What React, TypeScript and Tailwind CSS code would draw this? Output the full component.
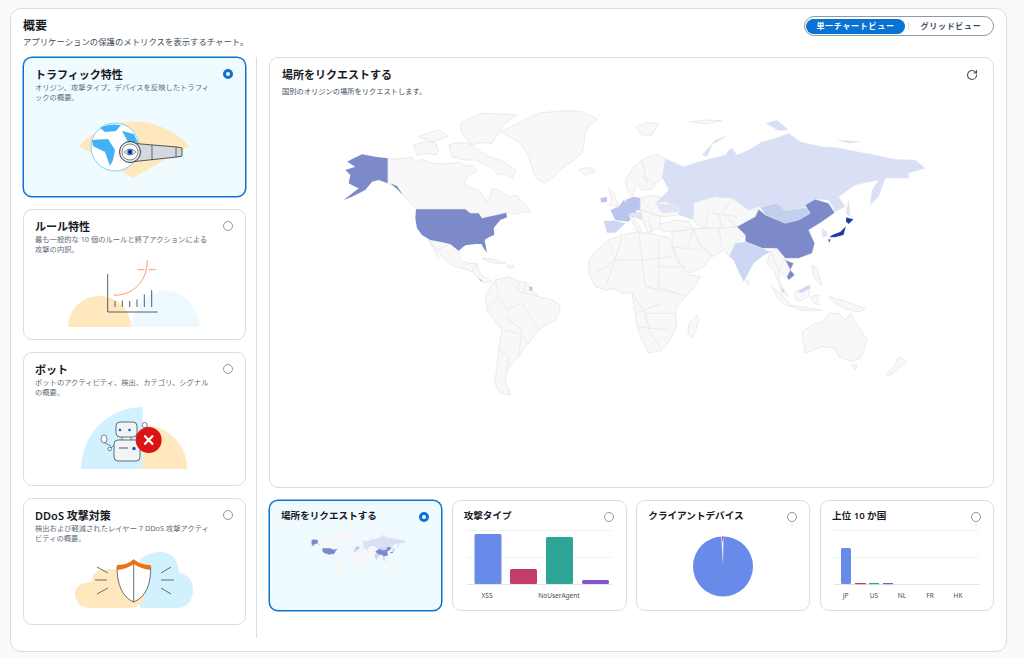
import { RotateCw } from 'lucide-react';
import type { ReactNode } from 'react';

const LAND = '#f8f8f8';
const EDGE = '#e6e6e6';

// outlines traced by eye, in zoomed-crop units (3 per page pixel)
const westLand = [
  '197,175 220,178 270,172 280,185 300,178 330,190 370,192 395,190 415,185 430,200 450,195 465,215 440,225 425,250 445,262 470,270 485,290 495,305 505,290 510,265 530,270 560,290 585,285 595,300 612,318 628,338 600,335 585,342 555,338 525,345 500,350 480,355 470,340 445,340 430,328 282,328 255,300 225,262 197,250',
  '275,135 310,125 340,128 350,150 345,165 310,160 285,165',
  '290,110 320,98 350,90 380,108 355,118 330,125',
  '415,70 450,52 480,40 530,42 585,45 560,62 540,80 525,105 510,130 480,128 450,135 435,118 420,100',
  '380,135 410,128 440,130 470,150 500,170 545,185 582,210 570,235 550,222 530,225 510,205 490,195 460,180 430,180 390,170',
  '535,95 590,70 650,40 720,32 780,35 828,58 800,78 790,100 785,135 780,160 750,185 720,205 695,230 670,250 650,240 640,230 628,195 620,170 605,145 590,125',
  '770,210 790,203 812,205 820,215 790,225',
  '320,420 355,425 385,432 410,452 412,470 415,480 440,490 465,490 455,505 450,515 420,505 395,498 380,490 360,470 345,450',
  '320,420 335,445 350,472 340,455',
  '450,515 465,490 470,510 480,525 510,545 495,548 480,545',
  '480,475 505,476 525,480 550,490 530,490 510,488',
  '555,495 575,497 572,505 558,504',
  '490,590 505,560 520,540 560,530 590,545 610,545 630,570 650,590 690,600 715,615 710,640 700,660 670,675 650,690 635,710 620,730 605,745 590,770 570,790 555,810 550,845 565,885 535,880 518,850 525,800 530,750 540,690 515,660 495,630',
  '860,265 875,280 880,290 890,320 860,315 870,300',
];
const westLines = [
  '520,540 530,590 495,630', '530,590 555,630 600,610 650,690', '560,530 590,575 650,590', '540,690 590,700 620,730',
  '550,650 600,690 590,770', '530,750 560,770 555,810', '610,545 605,578', '590,575 590,545', '422,505 440,490', '345,450 385,432',
];
const eastLand = [
  '-100,480 -75,450 -40,420 0,405 50,395 90,402 125,410 140,412 165,480 195,525 235,530 215,565 190,590 165,620 160,640 165,680 140,725 120,750 80,760 68,735 60,720 45,680 40,640 30,580 -5,578 -20,565 -50,570 -80,560 -100,520',
  '225,645 230,660 222,690 210,712 198,700 200,672',
  '10,240 35,200 60,180 90,165 110,165 135,180 125,205 125,230 100,250 88,268 60,270 45,250 30,290 15,265',
  '55,295 80,288 100,285 120,295 140,310 170,320 170,345 120,350 100,345 55,330',
  '55,330 115,350 115,385 95,390 80,400 65,370',
  '20,345 30,350 55,385 62,402 45,392',
  '115,372 160,360 200,365 215,385 185,392 150,395 115,392',
  '215,310 250,296 280,290 330,295 380,330 410,328 400,350 345,380 300,385 250,385 225,375 215,360',
  '150,395 185,392 215,385 228,420 240,440 270,470 240,505 200,520 175,490 150,440',
  '215,385 250,385 290,385 310,415 320,440 275,470 240,440 228,420',
  '290,385 345,380 370,405 340,430 322,470 300,440',
  '445,455 465,445 490,475 505,510 518,525 500,540 485,525 470,510 475,550 490,575 500,590 478,575 455,510 435,490',
  '450,560 480,585 510,620 490,615 465,590',
  '520,575 565,555 562,575 560,590 530,605 518,595',
  '500,615 550,622 600,630 540,632',
  '565,590 590,585 585,600 595,615 575,610',
  '570,495 585,505 590,520 600,555 590,550 575,530',
  '620,590 660,600 700,615 730,625 715,635 700,635 660,622 640,610',
  '540,695 580,670 600,668 620,640 650,640 670,660 685,640 710,680 735,720 725,755 715,775 690,785 650,770 640,745 600,740 550,760 545,730',
  '690,795 705,795 700,810',
  '830,770 855,785 830,805 800,830 795,820 815,800',
  '40,80 75,68 110,70 90,105 60,105',
  '205,65 250,60 300,62 250,72',
  '372,540 382,545 378,556',
];
const eastLines = [
  '-40,420 -20,480 -80,520', '-20,480 60,480 70,560', '60,480 150,470', '70,560 160,580', '30,580 70,640 160,640',
  '60,480 50,395', '110,420 110,560', '70,640 85,700 120,750', '-20,480 -50,560', '60,230 100,250', '60,180 75,250',
  '215,385 200,440', '300,385 290,340', '250,385 260,340', '150,440 230,450', '470,510 490,475', '80,350 90,395',
  '0,405 -20,480', '110,500 190,500', '110,560 190,590', '45,680 140,690', '330,295 300,340 345,380', '270,340 345,350',
  '445,455 470,510', '200,365 215,310', '60,300 100,345', '40,640 120,610',
];
const westShade: [string, string][] = [
  ['120,163 160,170 197,175 197,250 170,240 150,245 130,270 105,283 90,290 65,300 110,265 95,258 80,250 85,225 70,210 100,200 75,185 95,175', '#7d8aca'],
  ['205,250 225,258 243,285 228,270', '#7d8aca'],
  ['282,328 430,328 445,340 470,340 480,355 500,350 525,345 553,338 555,352 535,360 525,372 515,385 517,405 500,412 488,420 495,458 485,445 478,432 460,432 430,436 410,452 385,432 355,425 325,420 300,405 285,385 280,355', '#7d8aca'],
  ['622,560 632,560 632,572 622,572', '#b9c5ec'],
  ['468,533 480,540 478,546', '#b9c5ec'],
  ['835,295 855,290 855,305 838,308', '#b9c5ec'],
  ['865,330 890,320 905,300 945,335 920,365 880,360', '#b9c5ec'],
  ['910,300 935,290 958,295 960,330 925,332', '#b9c5ec'],
  ['845,362 880,362 910,370 895,385 880,398 855,398', '#cdd6f2'],
  ['920,340 960,335 960,360 935,352', '#dfe5f7'],
];
const eastShade: [string, string][] = [
  ['130,175 185,200 220,188 250,180 310,165 320,150 330,145 345,165 380,150 420,125 460,115 500,100 535,125 600,140 640,142 680,150 760,165 820,178 880,180 910,205 860,220 860,235 790,235 770,290 745,315 750,270 770,240 700,255 650,290 670,320 640,335 620,300 580,298 555,320 490,335 415,320 380,330 330,295 280,290 215,310 215,360 170,345 170,320 130,305 100,310 140,270 120,230', '#d9e0f6'],
  ['240,165 280,120 320,105 270,135 255,170', '#d9e0f6'],
  ['680,300 685,350 672,340', '#d9e0f6'],
  ['430,70 465,60 500,90 470,92', '#d9e0f6'],
  ['645,120 720,125 680,130', '#d9e0f6'],
  ['100,310 165,315 175,335 120,340', '#dfe5f7'],
  ['415,322 465,310 490,332 555,322 565,340 530,360 490,370 430,345', '#c4cfee'],
  ['345,380 400,350 410,328 430,345 490,370 530,360 565,340 550,315 580,298 620,310 638,338 600,365 560,390 578,430 570,460 530,475 490,475 465,445 420,445 370,425 370,405', '#7d8aca'],
  ['490,480 515,490 505,510 518,525 500,540 495,530 505,510', '#7d8aca'],
  ['340,430 370,425 420,445 445,455 420,470 395,490 365,545 345,505 335,480 322,470', '#cdd6f2'],
  ['600,385 615,395 615,410 600,410', '#dfe5f7'],
  ['475,558 490,575 482,578', '#cdd6f2'],
  ['525,575 560,555 565,565 540,578', '#cdd6f2'],
  ['672,352 695,358 680,372 672,365', '#1f35a5'],
  ['672,378 665,405 640,412 622,412 630,405 655,395', '#1f35a5'],
  ['618,418 626,418 622,428', '#1f35a5'],
];

function WorldMap({ className }: { className: string }) {
  return (
    <svg viewBox="320 100 620 300" className={className}>
      <g transform="translate(320 100) scale(.3333)" strokeWidth="2.4" strokeLinejoin="round">
        {westLand.map((p) => <polygon key={p} points={p} fill={LAND} stroke={EDGE} />)}
        {westLines.map((p) => <polyline key={p} points={p} fill="none" stroke={EDGE} />)}
        {westShade.map(([p, c]) => <polygon key={p} points={p} fill={c} stroke="none" />)}
      </g>
      <g transform="translate(620 100) scale(.3333)" strokeWidth="2.4" strokeLinejoin="round">
        {eastLand.map((p) => <polygon key={p} points={p} fill={LAND} stroke={EDGE} />)}
        {eastLines.map((p) => <polyline key={p} points={p} fill="none" stroke={EDGE} />)}
        {eastShade.map(([p, c]) => <polygon key={p} points={p} fill={c} stroke="#eef0f8" strokeWidth="1" />)}
      </g>
    </svg>
  );
}

function Radio({ on }: { on: boolean }) {
  return on ? (
    <span className="block w-[10px] h-[10px] shrink-0 rounded-full border-[3px] border-[#0972d3] bg-white" />
  ) : (
    <span className="block w-[10px] h-[10px] shrink-0 rounded-full border border-[#8d99a8] bg-white" />
  );
}

function SideCard({ title, desc, on, h, children }: { title: string; desc: ReactNode; on?: boolean; h: string; children: ReactNode }) {
  return (
    <div className={`${h} w-[223px] rounded-[9px] pl-[11px] pr-[11px] pt-[10px] border ${on ? 'border-[#0972d3] ring-[0.5px] ring-[#0972d3] bg-[#f0fbff]' : 'border-[#d9dde1] bg-white'}`}>
      <div className="flex justify-between items-start">
        <div>
          <div className="text-[11px] leading-[13px] font-semibold text-[#16191f]">{title}</div>
          <div className="text-[7.3px] leading-[10px] mt-[1px] text-[#5f6b7a]">{desc}</div>
        </div>
        <div className="mt-[1px] mr-[1px]"><Radio on={!!on} /></div>
      </div>
      {children}
    </div>
  );
}

function ChartCard({ title, on, w, children }: { title: string; on?: boolean; w: string; children: ReactNode }) {
  return (
    <div className={`${w} h-[111px] rounded-[9px] border ${on ? 'border-[#0972d3] ring-[0.5px] ring-[#0972d3] bg-[#f0fbff]' : 'border-[#d9dde1] bg-white'}`}>
      <div className="flex justify-between items-center h-[31px] pl-[11px] pr-[12px]">
        <span className="text-[9.6px] font-semibold text-[#16191f]">{title}</span>
        <Radio on={!!on} />
      </div>
      {children}
    </div>
  );
}

function TrafficArt() {
  return (
    <svg viewBox="70 105 130 80" className="w-[130px] h-[80px] mx-auto mt-[3px]">
      <path d="M79 146 A74 74 0 0 1 189 146 L133 178 Z" fill="#ffe8bd" />
      <circle cx="115" cy="147" r="24" fill="#fff" stroke="#5cbcf5" strokeWidth=".7" />
      <path d="M100 128 Q108 123 121 125 L116 131 L105 132 Z" fill="#44b0f5" />
      <path d="M92 140 L108 139 L115 150 L113 160 L110 166 L105 152 L93 146 Z" fill="#44b0f5" />
      <path d="M122 131 L134 134 L138 143 L128 142 Z" fill="#44b0f5" />
      <path d="M129 143 L177 147 L182 148 L182 156 L177 157 L130 162 Z" fill="#d5d9de" stroke="#16191f" strokeWidth=".7" />
      <path d="M152 145 L152 160 M176 147 L176 157" stroke="#16191f" strokeWidth=".6" />
      <circle cx="130" cy="152" r="10.5" fill="#e9ebed" stroke="#16191f" strokeWidth=".8" />
      <circle cx="130" cy="152" r="8" fill="#fff" stroke="#16191f" strokeWidth=".5" />
      <path d="M124 152 Q130 146 136 152 Q130 158 124 152 Z" fill="#fff" stroke="#16191f" strokeWidth=".5" />
      <circle cx="130" cy="152" r="2.8" fill="#0f5fc4" />
      <circle cx="130" cy="152" r="1.2" fill="#0b1a33" />
    </svg>
  );
}

function RuleArt() {
  return (
    <svg viewBox="60 255 150 73" className="w-[150px] h-[73px] mx-auto mt-[1px]">
      <path d="M131 327 A35 44 0 0 1 200 327 Z" fill="#edf9fe" />
      <path d="M68 327 A31.5 31 0 0 1 131 327 Z" fill="#ffe8bd" />
      <path d="M107.700 274 V312 H157.700" fill="none" stroke="#414d5c" strokeWidth=".9" />
      <path d="M115 307 V301 M122.300 307 V300.500 M129.700 307 V301 M137 307 V299.500 M144.300 307 V294.500 M151.700 307 V290" stroke="#414d5c" strokeWidth=".9" />
      <path d="M114 295.300 C133 295 147.300 282 147.300 260" fill="none" stroke="#f89256" strokeWidth=".9" />
      <path d="M137.700 269.700 H157.700" stroke="#f89256" strokeWidth=".9" strokeDasharray="7 4" />
    </svg>
  );
}

function BotArt() {
  return (
    <svg viewBox="65 405 140 65" className="w-[140px] h-[65px] mx-auto mt-[8px]">
      <path d="M81 469 A62 62 0 0 1 141 407 Q142.700 407 142.700 409 V469 Z" fill="#d1f1ff" />
      <path d="M142.700 425 A44.500 44 0 0 1 187.300 469 H142.700 Z" fill="#ffe8bd" />
      <path d="M111 446 L105 443 M110 449 L114 445" stroke="#414d5c" strokeWidth=".7" />
      <ellipse cx="104" cy="439" rx="3" ry="4" fill="#fff" stroke="#414d5c" strokeWidth=".7" />
      <circle cx="109.700" cy="449" r="1.800" fill="#fff" stroke="#414d5c" strokeWidth=".7" />
      <circle cx="144.700" cy="425" r="2.500" fill="#fff" stroke="#414d5c" strokeWidth=".7" />
      <rect x="122" y="436" width="9" height="5" fill="#f2f3f3" stroke="#414d5c" strokeWidth=".7" />
      <rect x="116" y="422" width="21" height="15" rx="4" fill="#f2f3f3" stroke="#414d5c" strokeWidth=".8" />
      <circle cx="120" cy="430" r="1.300" fill="#0f5fc4" />
      <circle cx="129.500" cy="430" r="1.300" fill="#0f5fc4" />
      <rect x="114" y="440" width="26" height="21" rx="4" fill="#f2f3f3" stroke="#414d5c" strokeWidth=".8" />
      <path d="M119 448 H128" stroke="#414d5c" strokeWidth=".9" />
      <circle cx="134" cy="448.500" r="1.800" fill="#0f5fc4" />
      <circle cx="148.700" cy="440" r="13" fill="#d91515" />
      <path d="M145 436.300 L152.400 443.700 M152.400 436.300 L145 443.700" stroke="#fff" strokeWidth="2.300" strokeLinecap="round" />
    </svg>
  );
}

function DdosArt() {
  return (
    <svg viewBox="65 550 140 62" className="w-[140px] h-[62px] mx-auto mt-[6px]">
      <path d="M140 609 V560 Q150 552 162 553 Q178 555 179 574 Q193 576 193 592 Q192 609 176 609 Z" fill="#d1f1ff" />
      <path d="M90 609 Q75 608 75 594 Q76 583 92 583 Q92 570 108 570 Q145 572 145 595 Q145 608 130 609 Z" fill="#ffe8bd" />
      <path d="M117 568 Q126 568 133.700 561 Q141 568 150.700 568 C151 585 146 598 133.700 603 C122 598 117 585 117 568 Z" fill="#fff" stroke="#414d5c" strokeWidth=".8" />
      <path d="M117 571 V566 Q127 566 133.700 560.500 Q141 566 150.700 566 V571 Q141 570 133.700 565 Q127 570 117 571 Z" fill="#ec7211" />
      <path d="M133.700 565 V603" stroke="#414d5c" strokeWidth=".8" />
      <path d="M97 568 L108 574 M95 581 H107 M97 595 L108 589 M161 574 L171 568 M161 581 H174 M161 589 L171 595" stroke="#414d5c" strokeWidth=".8" />
    </svg>
  );
}

const axis = '#e9ebed';
const labelClass = 'fill-[#414d5c] text-[6.5px]';

function AttackChart() {
  return (
    <svg viewBox="458 530 160 70" className="w-[160px] h-[70px] ml-[5px] -mt-[2px]">
      <path d="M467 530.500 H612 M467 557.500 H612" stroke={axis} strokeWidth=".7" />
      <path d="M467 584.500 H612" stroke="#d9dde1" strokeWidth=".8" />
      <rect x="474.500" y="534" width="27" height="50" rx="1.500" fill="#688ae8" />
      <rect x="510" y="569" width="27" height="15" rx="1.500" fill="#c33d69" />
      <rect x="546" y="537" width="27" height="47" rx="1.500" fill="#2ea597" />
      <rect x="582" y="580" width="27" height="4" rx="1.500" fill="#8456ce" />
      <text x="487" y="598" textAnchor="middle" className={labelClass}>XSS</text>
      <text x="559" y="598" textAnchor="middle" className={labelClass}>NoUserAgent</text>
    </svg>
  );
}

function DeviceChart() {
  return (
    <svg viewBox="690 534 66 66" className="w-[66px] h-[66px] mx-auto mt-[2px]">
      <circle cx="723" cy="566.500" r="30" fill="#688ae8" />
      <path d="M723 566.500 L721.300 536.500 L723.500 536.500 Z" fill="#f2f4fb" />
      <path d="M723.500 536.500 L722 536.500 L722.500 543 Z" fill="#c33d69" />
    </svg>
  );
}

function CountryChart() {
  const names = [['JP', 845.5], ['US', 874], ['NL', 902], ['FR', 930], ['HK', 958]] as const;
  return (
    <svg viewBox="826 530 160 70" className="w-[160px] h-[70px] ml-[5px] -mt-[2px]">
      <path d="M834.500 530.500 H979 M834.500 557.500 H979" stroke={axis} strokeWidth=".7" />
      <path d="M834.500 584.500 H979" stroke="#d9dde1" strokeWidth=".8" />
      <rect x="841" y="548" width="10" height="36" rx="1.500" fill="#688ae8" />
      <rect x="855" y="583" width="11" height="1.200" fill="#c33d69" />
      <rect x="869" y="583" width="10" height="1.200" fill="#2ea597" />
      <rect x="883" y="583" width="10" height="1.200" fill="#8456ce" />
      {names.map(([n, x]) => (
        <text key={n} x={x} y="598" textAnchor="middle" className={labelClass}>{n}</text>
      ))}
    </svg>
  );
}

export default function App() {
  return (
    <div
      className="w-[1024px] h-[658px] bg-[#fafafa] pt-[8px] px-[10px] overflow-hidden"
      style={{ fontFamily: '"Noto Sans", "Noto Sans CJK JP", sans-serif' }}
    >
      <div className="w-[997px] h-[644px] bg-white border border-[#d9dde1] rounded-[11px] pl-[12px] pr-[12px]">
        {/* Header */}
        <div className="flex justify-between h-[48px]">
          <div className="pt-[8px]">
            <h1 className="text-[12px] leading-[17px] font-bold text-[#16191f]">概要</h1>
            <p className="text-[8.4px] leading-[12px] mt-[2px] text-[#414d5c]">アプリケーションの保護のメトリクスを表示するチャート。</p>
          </div>
          <div className="mt-[7px] h-[20px] w-[190px] rounded-full border border-[#8d99a8] flex items-center pl-[1px] text-[8px] font-semibold tracking-[0.7px]">
            <span className="w-[99px] h-[15px] rounded-full bg-[#0972d3] text-white flex items-center justify-center">単一チャートビュー</span>
            <span className="w-[1px] h-[8px] bg-[#d9dde1] ml-[3px]" />
            <span className="flex-1 text-center text-[#414d5c]">グリッドビュー</span>
          </div>
        </div>

        {/* Body */}
        <div className="flex">
          <div className="flex flex-col gap-[12px] w-[223px]">
            <SideCard on title="トラフィック特性" h="h-[140px]" desc={<>オリジン、攻撃タイプ、デバイスを反映したトラフィ<br />ックの概要。</>}>
              <TrafficArt />
            </SideCard>
            <SideCard title="ルール特性" h="h-[131px]" desc={<>最も一般的な 10 個のルールと終了アクションによる<br />攻撃の内訳。</>}>
              <RuleArt />
            </SideCard>
            <SideCard title="ボット" h="h-[134px]" desc={<>ボットのアクティビティ、検出、カテゴリ、シグナル<br />の概要。</>}>
              <BotArt />
            </SideCard>
            <SideCard title="DDoS 攻撃対策" h="h-[127px]" desc={<>検出および軽減されたレイヤー 7 DDoS 攻撃アクティ<br />ビティの概要。</>}>
              <DdosArt />
            </SideCard>
          </div>

          <div className="w-px h-[581px] bg-[#d9dde1] ml-[10px] mr-[12px]" />

          <div className="w-[725px]">
            {/* Main map */}
            <div className="h-[431px] rounded-[9px] border border-[#d9dde1] bg-white px-[12px] pt-[10px]">
              <div className="flex justify-between items-start h-[32px]">
                <div>
                  <div className="text-[11px] leading-[14px] font-semibold text-[#16191f]">場所をリクエストする</div>
                  <div className="text-[7.25px] leading-[10px] mt-[4px] text-[#414d5c]">国別のオリジンの場所をリクエストします。</div>
                </div>
                <RotateCw className="w-[12px] h-[12px] mt-[1px] mr-[3px] text-[#414d5c]" strokeWidth={2.2} />
              </div>
              <WorldMap className="w-[620px] h-[300px] mx-auto" />
            </div>

            {/* Chart selector */}
            <div className="flex justify-between mt-[12px]">
              <ChartCard on title="場所をリクエストする" w="w-[173px]">
                <WorldMap className="w-[102px] h-[50px] ml-[37px] -mt-[2px]" />
              </ChartCard>
              <ChartCard title="攻撃タイプ" w="w-[175px]"><AttackChart /></ChartCard>
              <ChartCard title="クライアントデバイス" w="w-[174px]"><DeviceChart /></ChartCard>
              <ChartCard title="上位 10 か国" w="w-[174px]"><CountryChart /></ChartCard>
            </div>
          </div>
        </div>
      </div>
    </div>
  );
}
